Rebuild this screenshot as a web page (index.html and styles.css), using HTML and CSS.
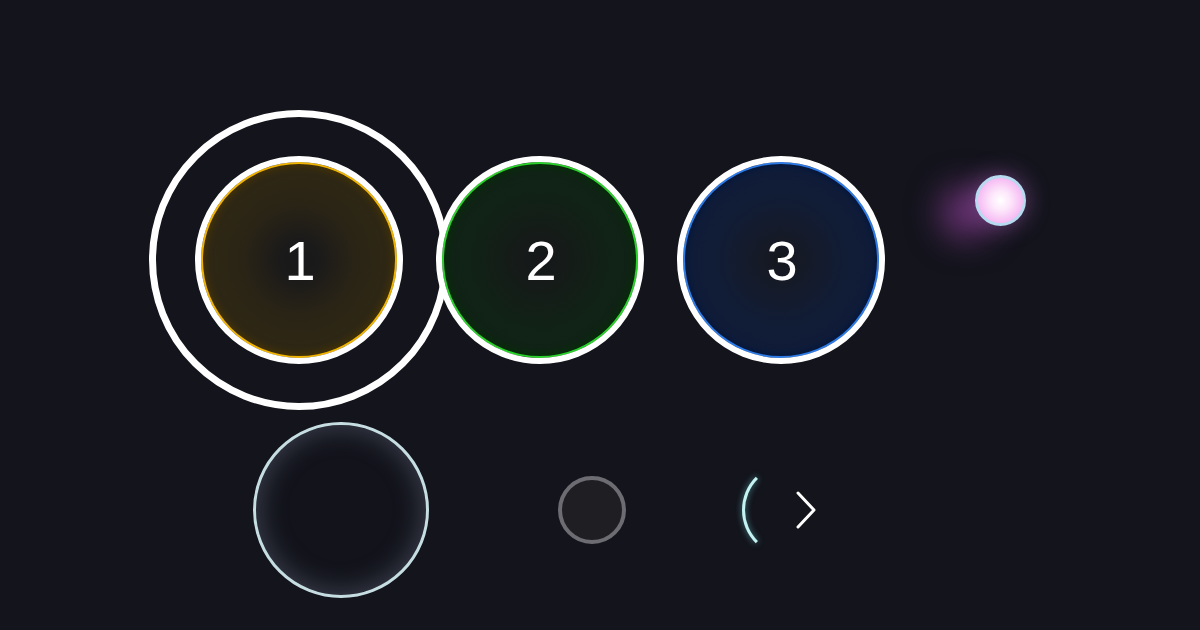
FILE: index.html
```html
<!DOCTYPE html>
<html lang="en">
<head>
<meta charset="utf-8">
<title>Circles</title>
<link rel="stylesheet" href="styles.css">
</head>
<body>
<main class="stage">
  <section class="row row-top">
    <div class="disc disc-yellow is-active"><span class="num">1</span></div>
    <div class="disc disc-green"><span class="num">2</span></div>
    <div class="disc disc-blue"><span class="num">3</span></div>
    <div class="orb"></div>
  </section>
  <section class="row row-bottom">
    <div class="bubble"></div>
    <div class="dot"></div>
    <div class="spinner"></div>
    <svg class="chev" width="24" height="40" viewBox="0 0 24 40" aria-hidden="true">
      <path d="M4 3 L20 20 L4 37" fill="none" stroke="#ffffff" stroke-width="3" stroke-linecap="round" stroke-linejoin="round"/>
    </svg>
  </section>
</main>
</body>
</html>
```

FILE: styles.css
```css
html, body {
  margin: 0;
  padding: 0;
  background: #13141c;
  width: 1200px;
  height: 630px;
  overflow: hidden;
  font-family: "Liberation Sans", Arial, sans-serif;
}

.stage {
  display: flex;
  flex-direction: column;
}

.row {
  display: flex;
  align-items: center;
}

.row-top {
  padding-top: 156px;
  padding-left: 195px;
  gap: 33px;
  height: 208px;
}

.disc {
  position: relative;
  width: 208px;
  height: 208px;
  box-sizing: border-box;
  border-radius: 50%;
  border: 6px solid #ffffff;
  display: flex;
  align-items: center;
  justify-content: center;
  flex: none;
}

.num {
  color: #ffffff;
  font-size: 56px;
  line-height: 1;
  margin-top: 2px;
  margin-left: 2px;
}

.disc-yellow {
  background: radial-gradient(circle at 50% 50%, #18181b 0%, #1b1a1a 14%, #2a2416 40%, #2f2814 70%, #2c2512 100%);
  box-shadow: inset 0 0 0 2px #f0b400, inset 0 0 8px 3px rgba(80, 56, 0, 0.9);
}

.disc-green {
  background: radial-gradient(circle at 50% 50%, #15171a 0%, #161a19 14%, #112116 45%, #102416 75%, #0e2012 100%);
  box-shadow: inset 0 0 0 2px #2bd12b, inset 0 0 8px 3px rgba(0, 50, 0, 0.9);
}

.disc-blue {
  background: radial-gradient(circle at 50% 50%, #15161c 0%, #161a26 14%, #111c35 45%, #101d3a 75%, #0e1a35 100%);
  box-shadow: inset 0 0 0 2px #2d7be6, inset 0 0 8px 3px rgba(0, 20, 60, 0.9);
}

.is-active::before {
  content: "";
  position: absolute;
  left: -52px;
  top: -52px;
  width: 300px;
  height: 300px;
  box-sizing: border-box;
  border: 7px solid #ffffff;
  border-radius: 50%;
  pointer-events: none;
}

.orb {
  align-self: flex-start;
  margin-top: 19px;
  margin-left: 57px;
  width: 51px;
  height: 51px;
  box-sizing: border-box;
  border-radius: 50%;
  border: 3px solid #b7daf0;
  background: radial-gradient(circle at 50% 50%, #ffffff 0%, #fde8fb 30%, #f5b6f2 75%, #eea4ec 100%);
  box-shadow: -34px 12px 34px rgba(190, 80, 200, 0.55), 0 0 24px rgba(210, 120, 230, 0.45);
  flex: none;
}

.row-bottom {
  margin-top: 58px;
  padding-left: 253px;
  height: 176px;
}

.bubble {
  width: 176px;
  height: 176px;
  box-sizing: border-box;
  border-radius: 50%;
  border: 3px solid #c6dde2;
  background: #12131b;
  box-shadow: inset 0 0 26px 4px rgba(130, 140, 160, 0.35);
  flex: none;
}

.dot {
  margin-left: 129px;
  width: 68px;
  height: 68px;
  box-sizing: border-box;
  border-radius: 50%;
  border: 4px solid #6c6c72;
  background: #1e1e23;
  flex: none;
}

.spinner {
  margin-left: 116px;
  width: 94px;
  height: 94px;
  box-sizing: border-box;
  border-radius: 50%;
  border: 3px solid transparent;
  border-left-color: #c4f3f3;
  filter: drop-shadow(0 0 3px rgba(120, 230, 230, 0.6));
  flex: none;
}

.chev {
  display: block;
  margin-left: -42px;
  flex: none;
}
```
